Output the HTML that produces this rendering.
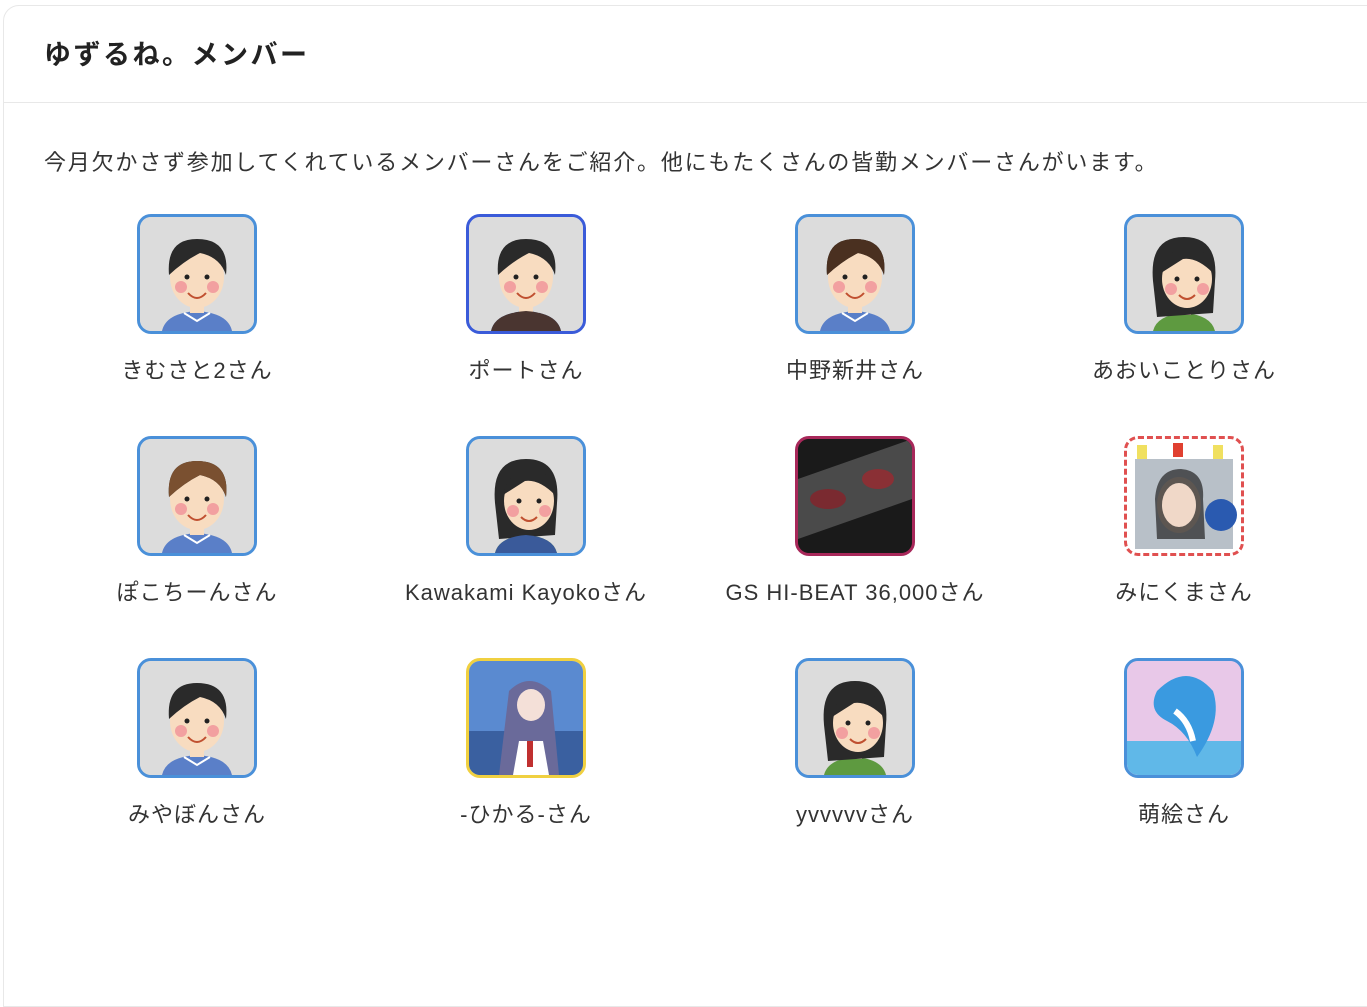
<!DOCTYPE html>
<html><head><meta charset="utf-8"><style>
body{margin:0;background:#fff;font-family:"Liberation Sans","Noto Sans CJK JP",sans-serif;color:#333;width:1367px;height:889px;overflow:hidden;position:relative}
.card{position:absolute;left:3px;top:5px;width:1380px;height:1000px;border:1.5px solid #e8e8e8;border-radius:16px 0 0 0}
h1{position:absolute;left:40px;top:31px;margin:0;font-size:27px;letter-spacing:2.5px;font-weight:bold;color:#222;line-height:36px}
.hr{position:absolute;left:0;right:0;top:96px;border-top:1.5px solid #e8e8e8}
.desc{position:absolute;left:40px;top:141px;font-size:22px;letter-spacing:1.8px;line-height:32px;color:#333;white-space:nowrap}
.m{position:absolute;width:300px;text-align:center}
.av{width:114px;height:114px;border:3px solid #4a90d9;border-radius:14px;margin:0 auto;overflow:hidden;background:#dcdcdc}
.av svg{display:block;width:114px;height:114px}
.nm{margin-top:22px;font-size:22px;letter-spacing:1px;line-height:30px;color:#333;white-space:nowrap}
</style></head><body>
<div class="card">
<h1>ゆずるね。メンバー</h1>
<div class="hr"></div>
<div class="desc">今月欠かさず参加してくれているメンバーさんをご紹介。他にもたくさんの皆勤メンバーさんがいます。</div>
</div>
<svg width="0" height="0" style="position:absolute"><defs>
<g id="man"><rect width="114" height="114" fill="#dcdcdc"/><path d="M22 114 Q26 96 57 94 Q88 96 92 114Z" fill="#5a7fc8"/><path d="M44 96 L57 104 L70 96" fill="none" stroke="#fff" stroke-width="2"/><rect x="50" y="78" width="14" height="18" fill="#f8dcc0"/><ellipse cx="57" cy="60" rx="27" ry="31" fill="#f8dcc0"/><path d="M29 58 Q26 22 57 22 Q90 22 86 58 Q80 40 60 36 Q44 44 29 58Z" fill="#2a2a2a"/><circle cx="47" cy="60" r="2.5" fill="#222"/><circle cx="67" cy="60" r="2.5" fill="#222"/><circle cx="41" cy="70" r="6" fill="#f2a0a0"/><circle cx="73" cy="70" r="6" fill="#f2a0a0"/><path d="M48 76 Q57 86 66 76" fill="none" stroke="#c05030" stroke-width="2"/></g>
<g id="woman"><rect width="114" height="114" fill="#dcdcdc"/><path d="M26 114 Q30 98 57 96 Q84 98 88 114Z" fill="#5e9a40"/><rect x="50" y="80" width="14" height="18" fill="#f8dcc0"/><path d="M26 64 Q22 20 57 20 Q92 20 88 64 L86 96 L30 100 Z" fill="#2a2a2a"/><ellipse cx="60" cy="62" rx="25" ry="29" fill="#f8dcc0"/><path d="M34 56 Q40 30 62 30 Q84 32 86 56 Q70 40 56 42Z" fill="#2a2a2a"/><circle cx="50" cy="62" r="2.5" fill="#222"/><circle cx="70" cy="62" r="2.5" fill="#222"/><circle cx="44" cy="72" r="6" fill="#f2a0a0"/><circle cx="76" cy="72" r="6" fill="#f2a0a0"/><path d="M52 78 Q60 86 68 78" fill="none" stroke="#c05030" stroke-width="2"/></g>
</defs></svg>

<div class="m" style="left:47px;top:214px"><div class="av"><svg><use href="#man"/></svg></div><div class="nm">きむさと2さん</div></div>
<div class="m" style="left:376px;top:214px"><div class="av" style="border-color:#3a5bd9"><svg><use href="#man"/><path d="M22 114 Q26 96 57 94 Q88 96 92 114Z" fill="#4a3530"/></svg></div><div class="nm">ポートさん</div></div>
<div class="m" style="left:705px;top:214px"><div class="av"><svg><use href="#man"/><path d="M29 58 Q26 22 57 22 Q90 22 86 58 Q80 40 60 36 Q44 44 29 58Z" fill="#4a3020"/></svg></div><div class="nm">中野新井さん</div></div>
<div class="m" style="left:1034px;top:214px"><div class="av"><svg><use href="#woman"/></svg></div><div class="nm">あおいことりさん</div></div>

<div class="m" style="left:47px;top:436px"><div class="av"><svg><use href="#man"/><path d="M29 58 Q26 22 57 22 Q90 22 86 58 Q80 40 60 36 Q44 44 29 58Z" fill="#7a5030"/></svg></div><div class="nm">ぽこちーんさん</div></div>
<div class="m" style="left:376px;top:436px"><div class="av"><svg><use href="#woman"/><path d="M26 114 Q30 98 57 96 Q84 98 88 114Z" fill="#3a5a9a"/></svg></div><div class="nm">Kawakami Kayokoさん</div></div>
<div class="m" style="left:705px;top:436px"><div class="av" style="border-color:#a8285a;background:#222"><svg><rect width="114" height="114" fill="#1a1a1a"/><path d="M0 40 L114 0 L114 60 L0 100Z" fill="#6a6a6a" opacity=".6"/><ellipse cx="30" cy="60" rx="18" ry="10" fill="#7a2a30"/><ellipse cx="80" cy="40" rx="16" ry="10" fill="#8a3035"/></svg></div><div class="nm">GS HI-BEAT 36,000さん</div></div>
<div class="m" style="left:1034px;top:436px"><div class="av" style="border:3px dashed #e05050;background:#fff"><svg><rect x="8" y="20" width="98" height="90" fill="#b8c0c8"/><ellipse cx="52" cy="66" rx="22" ry="28" fill="#e8d0c0"/><path d="M28 60 Q30 30 54 30 Q78 32 76 60 L78 100 L30 100Z" fill="#222" opacity=".7"/><ellipse cx="52" cy="66" rx="17" ry="22" fill="#f0d8c8"/><circle cx="94" cy="76" r="16" fill="#2a5ab0"/><rect x="10" y="6" width="10" height="14" fill="#f0e060"/><rect x="46" y="4" width="10" height="14" fill="#e04030"/><rect x="86" y="6" width="10" height="14" fill="#f0e060"/></svg></div><div class="nm">みにくまさん</div></div>

<div class="m" style="left:47px;top:658px"><div class="av"><svg><use href="#man"/></svg></div><div class="nm">みやぼんさん</div></div>
<div class="m" style="left:376px;top:658px"><div class="av" style="border-color:#f0d040"><svg><rect width="114" height="114" fill="#5a8ad0"/><rect y="70" width="114" height="44" fill="#3a60a0"/><path d="M40 30 Q60 10 82 30 L90 114 L30 114Z" fill="#6a6a9a"/><ellipse cx="62" cy="44" rx="14" ry="16" fill="#f4e0d8"/><path d="M50 80 L74 80 L80 114 L44 114Z" fill="#fff"/><rect x="58" y="80" width="6" height="26" fill="#c03030"/></svg></div><div class="nm">-ひかる-さん</div></div>
<div class="m" style="left:705px;top:658px"><div class="av"><svg><use href="#woman"/></svg></div><div class="nm">yvvvvvさん</div></div>
<div class="m" style="left:1034px;top:658px"><div class="av" style="background:#e8c8e0"><svg><rect width="114" height="114" fill="#e8c8e8"/><rect y="80" width="114" height="34" fill="#60b8e8"/><path d="M30 30 Q60 0 86 30 Q96 60 70 96 Q60 70 40 60 Q20 50 30 30Z" fill="#3a9ae0"/><path d="M48 50 Q62 60 66 80" fill="none" stroke="#fff" stroke-width="6"/></svg></div><div class="nm">萌絵さん</div></div>
</body></html>
